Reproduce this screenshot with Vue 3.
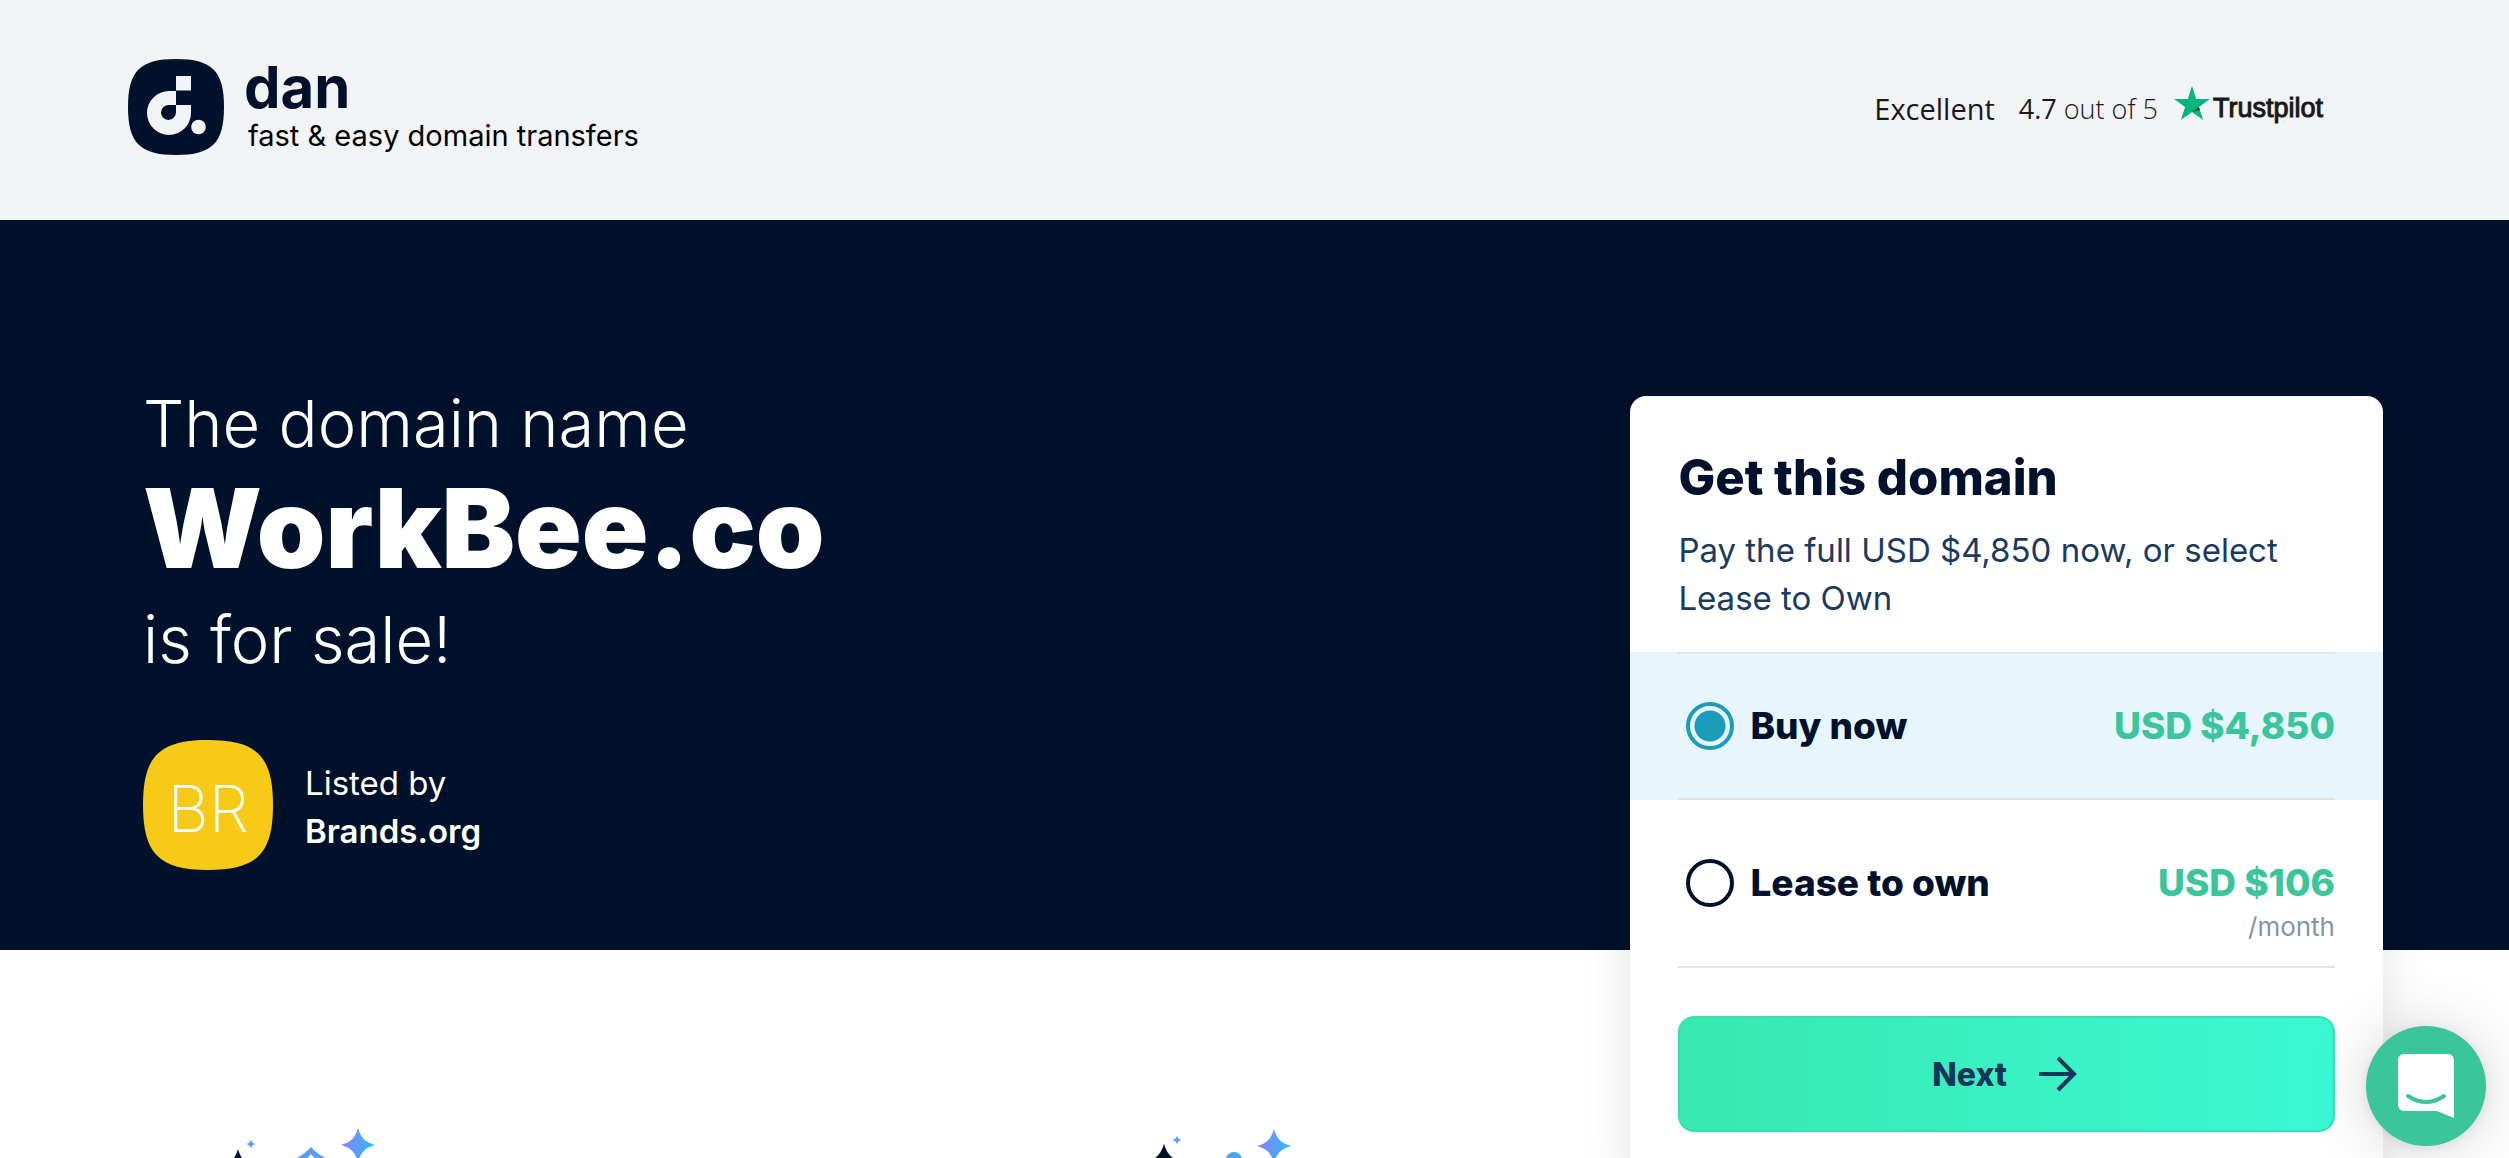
<script setup>
import { ref } from 'vue'

const selected = ref('buy')
const star = 'M0 -17C3 -7 7 -3 17 0C7 3 3 7 0 17C-3 7 -7 3 -17 0C-7 -3 -3 -7 0 -17Z'
</script>

<template>
  <div class="page">
    <header class="header">
      <a class="brand" href="#" aria-label="dan">
        <svg class="brand-mark" viewBox="0 0 96 96" aria-hidden="true">
          <path fill="#00112b" d="M48 0C84 0 96 12 96 48S84 96 48 96 0 84 0 48 12 0 48 0Z" />
          <path fill="#f1f3f5" d="M48 17h15v14.500H48zM48 32V46H41a7.500 7.500 0 1 0 7 7.500V46H63V54A22 22 0 1 1 41 32Z" />
          <circle fill="#f1f3f5" cx="70.500" cy="68" r="7.300" />
        </svg>
        <span class="brand-text">
          <span class="brand-name">dan</span>
          <span class="brand-tag">fast &amp; easy domain transfers</span>
        </span>
      </a>
      <a class="rating" href="#">
        <span class="rating-word">Excellent</span>
        <span class="rating-score"><b>4.7</b> out of 5</span>
        <span class="trust">
          <svg class="trust-star" viewBox="0 0 36 34" aria-hidden="true">
            <path fill="#00b67a" d="M18 0l4.250 13H36L24.900 21.100 29.100 34 18 26 6.900 34 11.100 21.100 0 13h13.750z" />
            <path fill="#005128" d="M25.800 24l-.9-2.900L18 26z" />
          </svg>
          <span class="trust-name">Trustpilot</span>
        </span>
      </a>
    </header>

    <section class="hero">
      <div class="copy">
        <h1 class="title">
          <span class="title-light">The domain name</span>
          <span class="title-domain">WorkBee.co</span>
          <span class="title-light title-last">is for sale!</span>
        </h1>
        <div class="seller">
          <div class="avatar">
            <svg class="avatar-shape" viewBox="0 0 96 96" aria-hidden="true">
              <path fill="#f7ca18" d="M48 0C84 0 96 12 96 48S84 96 48 96 0 84 0 48 12 0 48 0Z" />
            </svg>
            <span class="avatar-text">BR</span>
          </div>
          <div class="seller-text">
            <span>Listed by</span>
            <strong>Brands.org</strong>
          </div>
        </div>
      </div>

      <form class="card" @submit.prevent>
        <div class="card-head">
          <h2>Get this domain</h2>
          <p>Pay the full USD $4,850 now, or select Lease to Own</p>
        </div>
        <div class="option" :class="{ active: selected === 'buy' }">
          <div class="option-row first">
            <label class="choice">
              <input v-model="selected" type="radio" name="plan" value="buy" />
              <span>Buy now</span>
            </label>
            <div class="price"><strong>USD $4,850</strong></div>
          </div>
        </div>
        <div class="option" :class="{ active: selected === 'lease' }">
          <div class="option-row second">
            <label class="choice">
              <input v-model="selected" type="radio" name="plan" value="lease" />
              <span>Lease to own</span>
            </label>
            <div class="price"><strong>USD $106</strong><small>/month</small></div>
          </div>
        </div>
        <div class="card-foot">
          <button class="next" type="submit">
            <span>Next</span>
            <svg viewBox="0 0 38 36" aria-hidden="true">
              <path d="M0 18H35M19 2L35 18L19 34" fill="none" stroke="#14355c" stroke-width="4" />
            </svg>
          </button>
        </div>
      </form>
    </section>

    <section class="features">
      <svg class="feature-art" viewBox="0 0 240 120" aria-hidden="true">
        <defs>
          <linearGradient id="spark" x1="0" x2="1" y1="0" y2="0">
            <stop offset="0" stop-color="#8c7cfb" />
            <stop offset=".5" stop-color="#5b9ff5" />
            <stop offset="1" stop-color="#19c3fb" />
          </linearGradient>
        </defs>
        <path :d="star" fill="#00112b" transform="translate(94 40)" />
        <path :d="star" fill="url(#spark)" transform="translate(107 18) scale(.27)" />
        <path d="M167 21C172 27 180 32 190 36V52H144V36C154 32 162 27 167 21Z" fill="#5b9df2" />
        <path d="M167 28L177 40H157Z" fill="#fff" />
        <path :d="star" fill="url(#spark)" transform="translate(214 19)" />
      </svg>
      <svg class="feature-art" viewBox="0 0 240 120" aria-hidden="true">
        <path :d="star" fill="#00112b" transform="translate(104 36) scale(1.080)" />
        <path :d="star" fill="url(#spark)" transform="translate(117 14) scale(.27)" />
        <circle cx="174" cy="34" r="8" fill="#45a5f5" />
        <path :d="star" fill="url(#spark)" transform="translate(214 20)" />
      </svg>
    </section>

    <button class="chat" type="button" aria-label="Open chat">
      <svg viewBox="0 0 56 64" aria-hidden="true">
        <path d="M6 0H50A6 6 0 0 1 56 6V64L39 57H6A6 6 0 0 1 0 51V6A6 6 0 0 1 6 0Z" fill="#fff" />
        <path d="M10 42Q28 54 46 42" fill="none" stroke="#3ac69a" stroke-width="4" stroke-linecap="round" />
      </svg>
    </button>
  </div>
</template>

<style>
body {
  margin: 0;
  background: #fff;
}
</style>

<style scoped>
.page {
  position: relative;
  height: 100vh;
  overflow: hidden;
  font-family: Inter, "Liberation Sans", sans-serif;
  color: #00112b;
}
.header {
  display: flex;
  justify-content: space-between;
  align-items: center;
  box-sizing: border-box;
  min-height: 220px;
  padding: 0 186px 4px 128px;
  background: #f1f3f5;
}
.brand {
  display: flex;
  gap: 20px;
  color: #00112b;
  text-decoration: none;
}
.brand-mark {
  width: 96px;
  height: 96px;
}
.brand-text {
  display: flex;
  flex-direction: column;
}
.brand-name {
  font-size: 58px;
  font-weight: 700;
  line-height: 56px;
}
.brand-tag {
  padding-left: 4px;
  font-size: 29px;
  line-height: 42px;
  color: #000;
}
.rating {
  display: flex;
  align-items: center;
  color: #191919;
  font-family: "Open Sans", "Noto Sans", sans-serif;
  text-decoration: none;
}
.rating-word {
  font-size: 29px;
}
.rating-score {
  margin-left: 24px;
  font-size: 27px;
  font-weight: 300;
}
.rating-score b {
  font-weight: 400;
}
.trust {
  display: flex;
  align-items: flex-start;
  gap: 3px;
  margin-left: 16px;
}
.trust-star {
  width: 36px;
  height: 34px;
}
.trust-name {
  font-family: "Liberation Sans", Arial, sans-serif;
  font-size: 27px;
  line-height: 44px;
  -webkit-text-stroke: 1px #191919;
}
.hero {
  position: relative;
  z-index: 1;
  display: flex;
  justify-content: space-between;
  align-items: flex-start;
  padding: 164px 126px 80px 143px;
  background: #00112b;
}
.title {
  margin: 0;
  color: #fff;
}
.title span {
  display: block;
}
.title-light {
  font-size: 65px;
  font-weight: 300;
  line-height: 80px;
}
.title-domain {
  font-size: 110px;
  font-weight: 900;
  line-height: 128px;
}
.title .title-last {
  line-height: 96px;
}
.seller {
  display: flex;
  align-items: center;
  gap: 32px;
  margin-top: 52px;
  color: #fff;
  font-size: 33px;
  line-height: 48px;
}
.avatar {
  display: grid;
  place-items: center;
  width: 130px;
  height: 130px;
}
.avatar-shape,
.avatar-text {
  grid-area: 1 / 1;
}
.avatar-shape {
  width: 130px;
  height: 130px;
}
.avatar-text {
  position: relative;
  padding-top: 8px;
  font-size: 64px;
  font-weight: 200;
}
.seller-text {
  display: flex;
  flex-direction: column;
  padding-top: 4px;
}
.seller-text strong {
  font-weight: 600;
}
.card {
  width: 33.6%;
  margin: 12px 0 -400px;
  border-radius: 16px;
  background: #fff;
  box-shadow: 0 8px 48px rgba(0, 0, 0, 0.12);
}
.card-head {
  padding: 48px 48px 30px;
}
.card-head h2 {
  margin: 0 0 14px;
  font-size: 49px;
  font-weight: 800;
  line-height: 68px;
}
.card-head p {
  margin: 0;
  color: #1a3a60;
  font-size: 33px;
  line-height: 48px;
}
.option {
  padding: 0 48px;
}
.option.active {
  background: #e7f6fc;
}
.option-row {
  display: flex;
  justify-content: space-between;
  border-bottom: 2px solid #dfe4e7;
}
.first {
  padding: 48px 0;
  border-top: 2px solid #dfe4e7;
}
.second {
  padding: 59px 0 19px;
}
.choice {
  display: flex;
  align-items: center;
  gap: 16px;
  height: 48px;
  padding-left: 8px;
  font-size: 37px;
  font-weight: 800;
  line-height: 48px;
}
.choice input {
  appearance: none;
  width: 48px;
  height: 48px;
  margin: 0;
  border: 4px solid #00112b;
  border-radius: 50%;
  background: #fff;
}
.choice input:checked {
  border-color: #1b9cbb;
  background: radial-gradient(circle, #1b9cbb 15px, #e7f6fc 16px);
}
.price {
  display: flex;
  flex-direction: column;
  align-items: flex-end;
  color: #3ac69a;
  font-size: 37px;
  line-height: 48px;
}
.price strong {
  font-weight: 800;
}
.price small {
  color: #8893a7;
  font-size: 26px;
  line-height: 40px;
}
.card-foot {
  padding: 48px;
}
.next {
  display: flex;
  justify-content: center;
  align-items: center;
  gap: 32px;
  width: 100%;
  height: 116px;
  padding: 0 4px 0 0;
  border: 2px solid #3adfb3;
  border-radius: 16px;
  background: linear-gradient(90deg, #38e9af, #3bf8d4);
  color: #14355c;
  font-family: inherit;
  font-size: 32px;
  font-weight: 800;
}
.next svg {
  width: 38px;
  height: 36px;
}
.features {
  display: grid;
  grid-template-columns: 1fr 1fr;
  width: 73%;
  padding: 176px 0 0 144px;
}
.feature-art {
  width: 240px;
  height: 120px;
}
.chat {
  position: absolute;
  z-index: 2;
  right: 23px;
  bottom: 12px;
  display: grid;
  place-items: center;
  width: 120px;
  height: 120px;
  padding: 0;
  border: 0;
  border-radius: 50%;
  background: #3ac69a;
  box-shadow: 0 2px 64px rgba(0, 0, 0, 0.16), 0 2px 12px rgba(0, 0, 0, 0.08);
}
.chat svg {
  width: 56px;
  height: 64px;
}
</style>
